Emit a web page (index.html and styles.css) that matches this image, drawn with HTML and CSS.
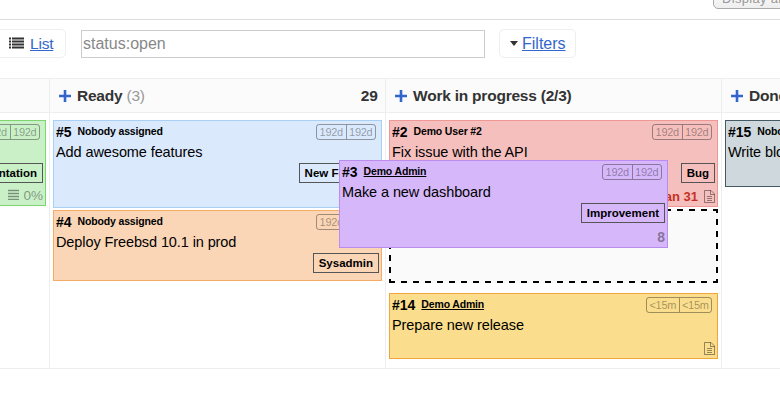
FILE: index.html
```html
<!DOCTYPE html>
<html lang="en">
<head>
<meta charset="utf-8">
<title>Board</title>
<link rel="stylesheet" href="styles.css">
</head>
<body>
<svg class="defs" width="0" height="0">
  <symbol id="doc" viewBox="0 0 11 13"><path d="M.5.5H7L10.5 4V12.500H.5ZM6.500 .5V4.500H10.5M3 6.500H8M3 8.500H8M3 10.500H8" fill="none" stroke="currentColor"/></symbol>
  <symbol id="plus" viewBox="0 0 12 12"><path d="M6 0V12M0 6H12" fill="none" stroke="currentColor" stroke-width="2.6"/></symbol>
</svg>
<header class="top"><div class="select">Display another project</div></header>
<nav class="toolbar">
  <div class="views">
    <svg class="list-icon" width="15" height="12" viewBox="0 0 15 12"><path d="M0 1.500H2M3 1.500H15M0 4.500H2M3 4.500H15M0 7.500H2M3 7.500H15M0 10.500H2M3 10.500H15" stroke="#333" stroke-width="2"/></svg>
    <a>List</a>
  </div>
  <input class="search" type="text" value="status:open">
  <div class="filters"><i class="caret"></i><a>Filters</a></div>
</nav>
<main class="board">
  <section class="column">
    <h2></h2>
    <div class="cards">
      <article class="card green">
        <div class="head"><span class="age"><span>192d</span><span>192d</span></span></div>
        <p class="title"></p>
        <div class="tags"><span class="tag">Documentation</span></div>
        <div class="foot"><svg class="bars" width="11" height="11" viewBox="0 0 11 11"><path d="M0 1.500H11M0 4.500H11M0 7.500H11M0 10.500H11" stroke="currentColor" stroke-width="1.500"/></svg><span class="percent">0%</span></div>
      </article>
    </div>
  </section>
  <section class="column">
    <h2><svg class="plus"><use href="#plus"/></svg><span class="name">Ready</span><span class="count">(3)</span><span class="score">29</span></h2>
    <div class="cards">
      <article class="card blue">
        <div class="head"><b class="num">#5</b><span class="who">Nobody assigned</span><span class="age"><span>192d</span><span>192d</span></span></div>
        <p class="title">Add awesome features</p>
        <div class="tags"><span class="tag">New Feature</span></div>
      </article>
      <article class="card orange">
        <div class="head"><b class="num">#4</b><span class="who">Nobody assigned</span><span class="age"><span>192d</span><span>192d</span></span></div>
        <p class="title">Deploy Freebsd 10.1 in prod</p>
        <div class="tags"><span class="tag">Sysadmin</span></div>
      </article>
    </div>
  </section>
  <section class="column">
    <h2><svg class="plus"><use href="#plus"/></svg><span class="name">Work in progress (2/3)</span></h2>
    <div class="cards">
      <article class="card red">
        <div class="head"><b class="num">#2</b><span class="who">Demo User #2</span><span class="age"><span>192d</span><span>192d</span></span></div>
        <p class="title">Fix issue with the API</p>
        <div class="tags"><span class="tag">Bug</span></div>
        <div class="foot"><span class="due">Jan 31</span><svg class="doc"><use href="#doc"/></svg></div>
      </article>
      <div class="placeholder"><svg width="329" height="74"><g stroke="#000" stroke-width="2" stroke-dasharray="6 6"><path d="M0 1H329M0 73H329"/><path d="M1 0V74M328 0V74" stroke-dashoffset="2"/></g></svg></div>
      <article class="card gold">
        <div class="head"><b class="num">#14</b><span class="who user">Demo Admin</span><span class="age recent"><span>&lt;15m</span><span>&lt;15m</span></span></div>
        <p class="title">Prepare new release</p>
        <div class="foot"><svg class="doc"><use href="#doc"/></svg></div>
      </article>
      <article class="card purple dragging">
        <div class="head"><b class="num">#3</b><span class="who user">Demo Admin</span><span class="age"><span>192d</span><span>192d</span></span></div>
        <p class="title">Make a new dashboard</p>
        <div class="tags"><span class="tag">Improvement</span></div>
        <div class="foot"><b class="points">8</b></div>
      </article>
    </div>
  </section>
  <section class="column">
    <h2><svg class="plus"><use href="#plus"/></svg><span class="name">Done</span></h2>
    <div class="cards">
      <article class="card grey">
        <div class="head"><b class="num">#15</b><span class="who">Nobody assigned</span></div>
        <p class="title">Write blog post</p>
      </article>
    </div>
  </section>
</main>
</body>
</html>
```
FILE: styles.css
```css
* { box-sizing: border-box; }
body {
  margin: 0;
  height: 415px;
  overflow: hidden;
  background: #fff;
  color: #333;
  font-family: "Liberation Sans", Arial, sans-serif;
}
.defs { position: absolute; }
.top {
  height: 20px;
  border-bottom: 1px solid #dcdcdc;
  overflow: hidden;
}
.select {
  width: 200px;
  height: 22px;
  margin: -13px 0 0 713px;
  padding: 0 8px;
  border: 1px solid #aaa;
  border-radius: 5px;
  background: linear-gradient(#fff, #eee);
  color: #999;
  font-size: 13px;
  line-height: 21px;
  letter-spacing: .3px;
}
.toolbar {
  display: flex;
  align-items: flex-start;
  height: 58px;
  padding-top: 9px;
  font-size: 16px;
}
.toolbar a {
  color: #36c;
  text-decoration: underline;
}
.views, .filters {
  display: flex;
  align-items: center;
  height: 29px;
  border: 1px solid #eee;
  border-radius: 5px;
}
.views {
  width: 76px;
  margin-left: -10px;
  padding-left: 18px;
}
.views a { margin-left: 6px; font-size: 15.500px; letter-spacing: -.2px; }
.list-icon { margin-top: -1px; }
.search {
  width: 404px;
  height: 28px;
  margin: 1px 14px 0 15px;
  padding: 0 1px;
  border: 1px solid #ccc;
  color: #888;
  font: 16px "Liberation Sans", Arial, sans-serif;
}
.filters {
  width: 77px;
  padding-left: 10px;
}
.filters a { margin-left: 4px; }
.caret {
  border: 4.500px solid transparent;
  border-top: 5px solid #333;
  border-bottom: 0;
}
.board {
  display: flex;
  width: 1344px;
  height: 291px;
  margin-left: -286px;
  border-top: 1px solid #eee;
  border-bottom: 1px solid #eee;
}
.column {
  flex: 0 0 336px;
  border-right: 1px solid #eee;
}
h2 {
  display: flex;
  align-items: center;
  height: 34px;
  margin: 0;
  padding: 0 7px 0 9px;
  border-bottom: 1px solid #eee;
  background: #fbfbfb;
  font-size: 15.500px;
  letter-spacing: -.22px;
}
.plus {
  width: 12px;
  height: 12px;
  margin: 1px 6px 0 0;
  color: #36c;
}
.count {
  margin-left: 4px;
  color: #999;
  font-weight: normal;
}
.score { margin-left: auto; letter-spacing: 0; }
.cards {
  position: relative;
  padding: 7px 3px 0;
}
.card {
  display: flex;
  flex-direction: column;
  width: 329px;
  padding: 3px 2px 2px;
  border: 1px solid;
  color: #000;
}
.green { height: 86px; background: #caf0c8; border-color: #7cd66f; }
.blue { height: 88px; margin-bottom: 2px; background: #dbe9fc; border-color: #a8cff6; }
.orange { height: 71px; background: #fad6b7; border-color: #f5ac66; }
.red { height: 87px; margin-bottom: 2px; background: #f5bfbd; border-color: #ee9795; }
.gold { height: 66px; margin-top: 10px; background: #fadd8d; border-color: #f2a53d; }
.purple { height: 88px; background: #d6b8fa; border-color: #bb8bf0; }
.grey { height: 67px; background: #cfd8dc; border-color: #455a64; }
.dragging {
  position: absolute;
  left: -47px;
  top: 47px;
}
.head {
  display: flex;
  height: 16px;
  flex: none;
  line-height: 16px;
}
.num { font-size: 14px; }
.who {
  margin-left: 6px;
  font-size: 10.500px;
  font-weight: bold;
  line-height: 15px;
  letter-spacing: -.16px;
}
.user { text-decoration: underline; }
.age {
  display: flex;
  width: 60px;
  height: 16px;
  margin: 0 3px 0 auto;
  border: 1px solid;
  border-radius: 3px;
  color: #0000005c;
  font-size: 11px;
  line-height: 14px;
}
.age span {
  flex: 1;
  text-align: center;
  letter-spacing: -.3px;
}
.age span + span { border-left: 1px solid; }
.recent { width: 66px; }
.title {
  height: 23px;
  margin: 0;
  font-size: 14.500px;
  line-height: 24px;
  letter-spacing: -.1px;
}
.tags {
  display: flex;
  justify-content: flex-end;
  flex: none;
}
.tag {
  height: 20px;
  padding: 0 5px;
  border: 1px solid #555;
  font-size: 11.500px;
  font-weight: bold;
  line-height: 18px;
}
.foot {
  display: flex;
  align-items: flex-start;
  justify-content: flex-end;
  height: 14px;
  margin-top: auto;
  color: #00000066;
  font-size: 14px;
  line-height: 13px;
}
.doc { width: 11px; height: 13px; margin-left: 6px; }
.percent { margin-left: 4px; font-size: 13.500px; }
.due { color: #c63127; font-size: 13px; font-weight: bold; }
.placeholder {
  height: 74px;
  background: #fafafa;
}
.placeholder svg { display: block; }
```
